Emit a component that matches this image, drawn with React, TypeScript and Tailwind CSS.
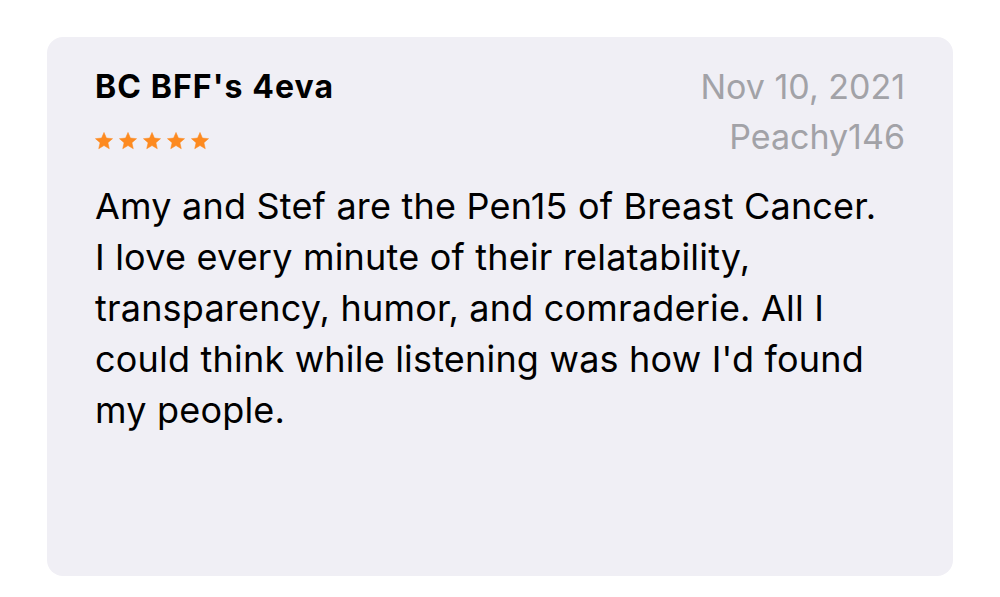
import React from "react";

const Star = () => (
  <svg width="18" height="17.5" viewBox="0 0 20 19.5" className="block">
    <path
      d="M10 0.5L12.7 6.78L19.51 7.41L14.37 11.92L15.88 18.59L10 15.1L4.12 18.59L5.63 11.92L0.49 7.41L7.3 6.78Z"
      fill="#fd8a20"
      stroke="#fd8a20"
      strokeWidth="0.6"
      strokeLinejoin="round"
    />
  </svg>
);

export default function App() {
  return (
    <div className="w-[1000px] h-[597px] bg-white pt-[37px] pl-[47px]" style={{ fontFamily: "Inter, 'Noto Sans', sans-serif" }}>
      <div className="w-[906px] h-[539px] rounded-[16px] bg-[#f0eff5] px-[48px] pt-[27px]">
        <div className="flex justify-between items-start">
          <div className="flex flex-col">
            <div className="text-[32px] leading-[45px] font-bold tracking-[1.1px] text-black">BC BFF's 4eva</div>
            <div className="flex gap-[6px] mt-[23px]">
              <Star />
              <Star />
              <Star />
              <Star />
              <Star />
            </div>
          </div>
          <div className="flex flex-col items-end text-[#a2a2a7] text-[34px] leading-[50px] -mt-[2px]">
            <div>Nov 10, 2021</div>
            <div>Peachy146</div>
          </div>
        </div>
        <p className="mt-[19px] w-[790px] text-[36px] leading-[51px] tracking-[0.2px] text-black">
          Amy and Stef are the Pen15 of Breast Cancer. I love every minute of their relatability, transparency, humor, and comraderie. All I could think while listening was how I'd found my people.
        </p>
      </div>
    </div>
  );
}
